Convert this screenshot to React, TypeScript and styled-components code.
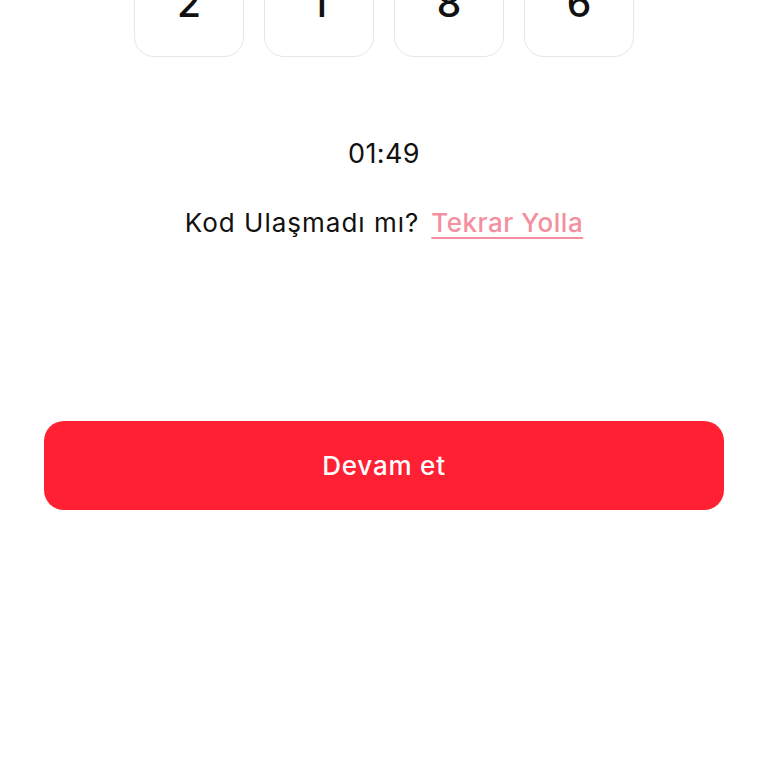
import React from "react";
import styled, { createGlobalStyle } from "styled-components";

const Global = createGlobalStyle`
  html, body { margin: 0; padding: 0; background: #ffffff; }
  body { font-family: "Inter", "Open Sans", sans-serif; color: #111111; }
`;

const Page = styled.main`
  width: 768px;
  height: 768px;
  overflow: hidden;
  display: flex;
  flex-direction: column;
  align-items: center;
`;

const CodeRow = styled.div`
  margin-top: -53px;
  display: flex;
  gap: 20px;
`;

const CodeBox = styled.div`
  width: 108px;
  height: 108px;
  border: 1px solid #e6e6e6;
  border-radius: 20px;
  display: flex;
  align-items: center;
  justify-content: center;
  font-size: 39px;
  font-weight: 500;
  color: #111111;
  background: #ffffff;
`;

const Timer = styled.div`
  margin-top: 79px;
  font-size: 27px;
  line-height: 36px;
  letter-spacing: 0.4px;
  font-weight: 400;
  color: #111111;
`;

const ResendRow = styled.div`
  margin-top: 35px;
  display: flex;
  align-items: baseline;
  gap: 12px;
  font-size: 26px;
  line-height: 32px;
`;

const Question = styled.span`
  color: #111111;
  font-weight: 400;
  letter-spacing: 1px;
`;

const ResendLink = styled.a`
  color: #f48fa0;
  font-weight: 500;
  letter-spacing: 0.5px;
  text-decoration: underline;
  text-underline-offset: 5px;
  text-decoration-thickness: 2px;
  cursor: pointer;
`;

const PrimaryButton = styled.button`
  margin-top: 182px;
  width: 680px;
  height: 89px;
  border: none;
  border-radius: 20px;
  background: #ff2033;
  color: #ffffff;
  font-family: "Inter", "Open Sans", sans-serif;
  font-size: 26px;
  font-weight: 500;
  letter-spacing: 0.8px;
  cursor: pointer;
`;

const digits = ["2", "1", "8", "6"];

export default function App() {
  return (
    <Page>
      <Global />
      <CodeRow>
        {digits.map((d, i) => (
          <CodeBox key={i}>{d}</CodeBox>
        ))}
      </CodeRow>
      <Timer>01:49</Timer>
      <ResendRow>
        <Question>Kod Ulaşmadı mı?</Question>
        <ResendLink>Tekrar Yolla</ResendLink>
      </ResendRow>
      <PrimaryButton>Devam et</PrimaryButton>
    </Page>
  );
}
